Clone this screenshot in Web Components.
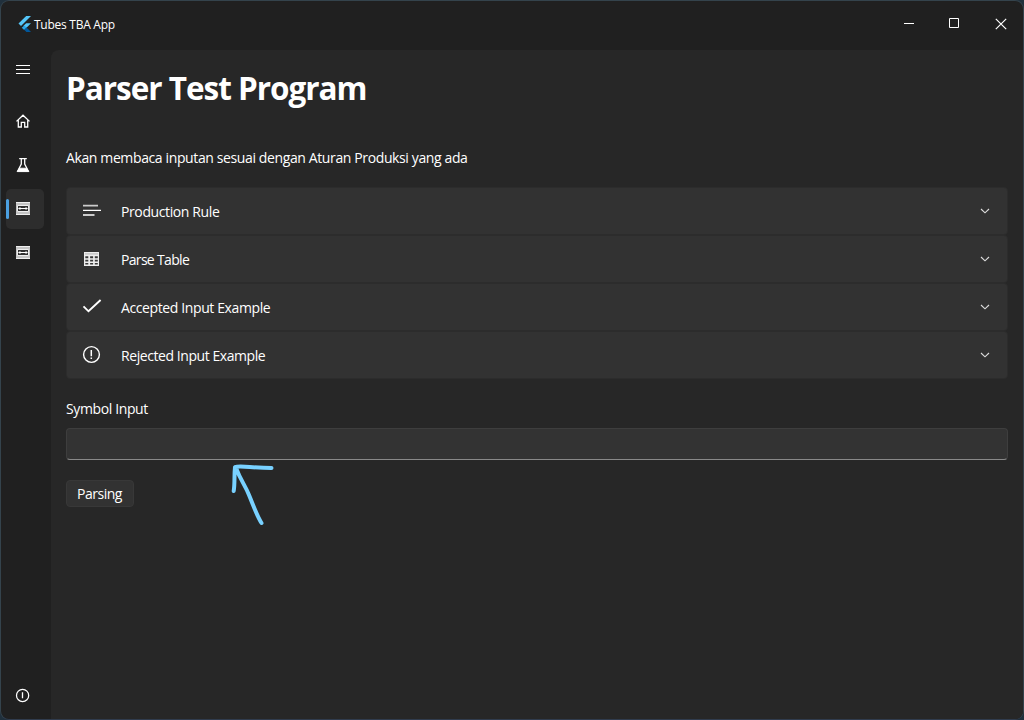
<!DOCTYPE html>
<html lang="id">
<head>
<meta charset="utf-8">
<title>Tubes TBA App</title>
<style>
html,body{margin:0;height:100%;overflow:hidden;background:#20303c}
body{font-family:"Open Sans","Noto Sans",sans-serif;color:#fff}
</style>
</head>
<body>
<app-window>
  <title-bar slot="title">Tubes TBA App</title-bar>
  <nav-pane slot="nav"></nav-pane>
  <parser-page>
    <expander-item icon="lines" style="--track:-.39px">Production Rule</expander-item>
    <expander-item icon="table" style="--track:-.68px">Parse Table</expander-item>
    <expander-item icon="check" style="--track:-.39px">Accepted Input Example</expander-item>
    <expander-item icon="alert" style="--track:-.43px">Rejected Input Example</expander-item>
  </parser-page>
</app-window>
<script>
const icons = {
  menu: ['0 0 16 16', '<path d="M1 3.5h14M1 7.5h14M1 11.5h14"/>'],
  home: ['0 0 16 16', '<path stroke-width="1.3" d="M1.5 8.4 8 2.2l6.5 6.2M3.3 7.3V14h3V9.3h3.4V14h3V7.3"/>'],
  flask: ['0 0 16 16', '<path stroke-width="1.3" d="M4.2 1.6h7.6M6.3 2v5L2.7 14h10.6L9.7 7V2"/><path d="M4.3 11.2h7.4l2 3.4H2.3z" fill="currentColor" stroke-width=".8"/>'],
  width: ['0 0 16 16', '<path d="M1 1h14v13H1z" fill="#c4c4c4" stroke="none"/><path stroke="#eee" d="M1 1.5h14M1 13.5h14"/><path d="M2.5 4.5h11v6h-11z" fill="#303030" stroke="#eee"/><path d="M4 7.5h8"/><path stroke="none" fill="#fff" d="M3 7.5 5.4 5.9v3.2zM13 7.5 10.6 5.9v3.2z"/>'],
  info: ['0 0 16 16', '<circle cx="7.6" cy="8.4" r="6.1" stroke-width="1.25"/><path stroke-width="1.3" d="M7.5 5.2v6"/>'],
  lines: ['0 0 20 20', '<path stroke="#ccc" stroke-width="1.8" d="M1 5.6h15M1 15h11.5"/><path stroke-width="1.4" d="M1 10.4h18"/>'],
  table: ['0 0 20 20', '<path d="M2 4h15v14H2z" fill="#eee" stroke="none"/><path d="M3 5h13v1.7H3z" fill="#ccc" stroke="none"/><path d="M3.3 8.2h3v2h-3zm4.8 0h3v2h-3zm4.7 0h3v2h-3zm-9.5 3.5h3v1.7h-3zm4.8 0h3v1.7h-3zm4.7 0h3v1.7h-3zm-9.5 3.2h3v1.7h-3zm4.8 0h3v1.7h-3zm4.7 0h3v1.7h-3z" fill="#3a3a3a" stroke="none"/>'],
  check: ['0 0 20 20', '<path stroke-width="1.9" d="m1.5 10.3 5 5L18.6 4"/>'],
  alert: ['0 0 20 20', '<circle cx="9.5" cy="10.5" r="7.9" stroke-width="1.4"/><path stroke-width="1.5" d="M9.3 6.1v6.1M9.3 13.6v1.5"/>'],
  chevron: ['0 0 10 6', '<path stroke="#ddd" stroke-width="1.15" d="m1 1 4 3.8L9 1"/>'],
  min: ['0 0 12 12', '<path d="M1 6.5h10"/>'],
  max: ['0 0 12 12', '<path d="M1.5 1.5h9v9h-9z"/>'],
  close: ['0 0 12 12', '<path stroke-width="1.2" d="m.8.8 10.4 10.4M11.2.8.8 11.2"/>'],
  flutter: ['0 0 14 16', '<path stroke="none" fill="#54c5f8" d="M8.2 0H13L3 10 .5 7.6z"/><path stroke="none" fill="#54c5f8" d="M8.2 7.3H13L8.5 11.8l-3-2z"/><path stroke="none" fill="#29a6e8" d="m6.2 9.4 2.4 2.4L6.2 14 3.7 11.8z"/><path stroke="none" fill="#01579b" d="m6.2 13.7 2.4-2.2L13 16H8.4z"/>']
};
const define = (name, html, setup) => customElements.define(name, class extends HTMLElement {
  connectedCallback() {
    if (this.shadowRoot) return;
    this.attachShadow({mode: 'open'}).innerHTML = typeof html === 'function' ? html(this) : html;
    if (setup) setup(this, this.shadowRoot);
  }
});

define('ui-icon', `<style>:host{display:block;flex:none}svg{display:block;width:100%;height:100%;fill:none;stroke:currentColor;stroke-width:1}</style><svg></svg>`,
  (el, root) => {
    const [box, art] = icons[el.getAttribute('name')];
    const svg = root.querySelector('svg');
    svg.setAttribute('viewBox', box);
    svg.innerHTML = art;
  });

define('app-window', `<style>
:host{display:grid;box-sizing:border-box;width:1024px;height:720px;grid-template:49px 1fr / 50px 1fr;background:#202020;border:1px solid #34434c;border-bottom-color:#303c4e;border-radius:9px;overflow:hidden}
.title{grid-column:1/3}
main{background:#272727;border-top-left-radius:8px;min-width:0}
</style><div class="title"><slot name="title"></slot></div><slot name="nav"></slot><main><slot></slot></main>`);

define('title-bar', `<style>
:host{display:flex;height:48px;align-items:center;font-size:12px;letter-spacing:-.26px}
.logo{width:14px;height:16px;margin:-2px 2px 0 17px}
span{flex:1;line-height:16px}
.controls{display:flex;gap:34px;margin:-3px 16px 0 0}
.controls ui-icon{width:12px;height:12px}
.controls .max{margin:0 1px 0 -1px}
.controls .close{margin-top:1px}
</style><ui-icon class="logo" name="flutter"></ui-icon><span><slot></slot></span>
<div class="controls"><ui-icon name="min"></ui-icon><ui-icon class="max" name="max"></ui-icon><ui-icon class="close" name="close"></ui-icon></div>`);

define('nav-item', el => `<style>
:host{display:flex;align-items:center;width:38px;height:40px;border-radius:5px}
i{width:3px;height:20px;border-radius:2px}
ui-icon{width:16px;height:16px;margin-left:6px}
:host([selected]){background:#2d2d2d}
:host([selected]) i{background:#4ba0e1}
</style><i></i><ui-icon name="${el.getAttribute('icon')}"></ui-icon>`);

define('nav-pane', `<style>
:host{display:flex;flex-direction:column;box-sizing:border-box;padding:0 0 4px 5px;gap:4px}
.menu{margin-bottom:7px}.info{margin-top:auto}
</style><nav-item class="menu" icon="menu"></nav-item><nav-item icon="home"></nav-item><nav-item icon="flask"></nav-item><nav-item icon="width" selected></nav-item><nav-item icon="width"></nav-item><nav-item class="info" icon="info"></nav-item>`);

define('expander-item', el => `<style>
:host{display:flex;align-items:center;box-sizing:border-box;height:48px;padding:0 17px 0 15px;background:#323232;border:1px solid #2c2c2c;border-radius:4px;font-size:14px;letter-spacing:var(--track)}
span{flex:1;margin-left:19px;line-height:20px;padding-top:2px}
.lead{width:20px;height:20px;margin-top:-2px}
.chevron{width:10px;height:6px}
</style><ui-icon class="lead" name="${el.getAttribute('icon')}"></ui-icon><span><slot></slot></span><ui-icon class="chevron" name="chevron"></ui-icon>`);

define('text-box', `<style>
:host{display:block}
input{display:block;box-sizing:border-box;width:100%;height:32px;margin:0;padding:0 8px;background:#333;border:1px solid #3e3e3e;border-bottom-color:#898989;border-radius:4px;color:inherit;font:inherit;outline:0}
</style><input type="text" aria-label="Symbol Input">`);

define('push-button', `<style>
:host{display:block;letter-spacing:-.5px}
button{display:block;box-sizing:border-box;width:68px;height:27px;padding:0 1px 1px 0;background:#323232;border:1px solid #383838;border-radius:4px;color:inherit;font:inherit;letter-spacing:inherit;line-height:23px}
</style><button><slot></slot></button>`);

define('pointer-arrow', `<style>
:host{display:block;position:absolute;left:230px;top:462px;width:45px;height:64px;pointer-events:none}
svg{display:block;fill:none;stroke:#78d1ff;stroke-width:4;stroke-linecap:round;stroke-linejoin:round}
</style><svg width="45" height="64"><path d="M3.7 29C5 21 4 14 5 5c5-2 17 1 36.5 1M6 6c5 13 9 17 13 27 5 12 8 21 12.500 28"/></svg>`);

define('parser-page', `<style>
:host{display:block;padding:14px 15px 0 15px;font-size:14px;letter-spacing:-.38px}
h1{margin:0;font-size:31.5px;line-height:48px;font-weight:700;letter-spacing:-1.02px}
p{margin:36px 0 19px;line-height:20px}
label{display:block;margin:20px 0 9px;line-height:20px}
push-button{margin-top:20px}
</style><h1>Parser Test Program</h1><p>Akan membaca inputan sesuai dengan Aturan Produksi yang ada</p>
<slot></slot><label>Symbol Input</label><text-box></text-box><push-button>Parsing</push-button><pointer-arrow></pointer-arrow>`);
</script>
</body>
</html>
